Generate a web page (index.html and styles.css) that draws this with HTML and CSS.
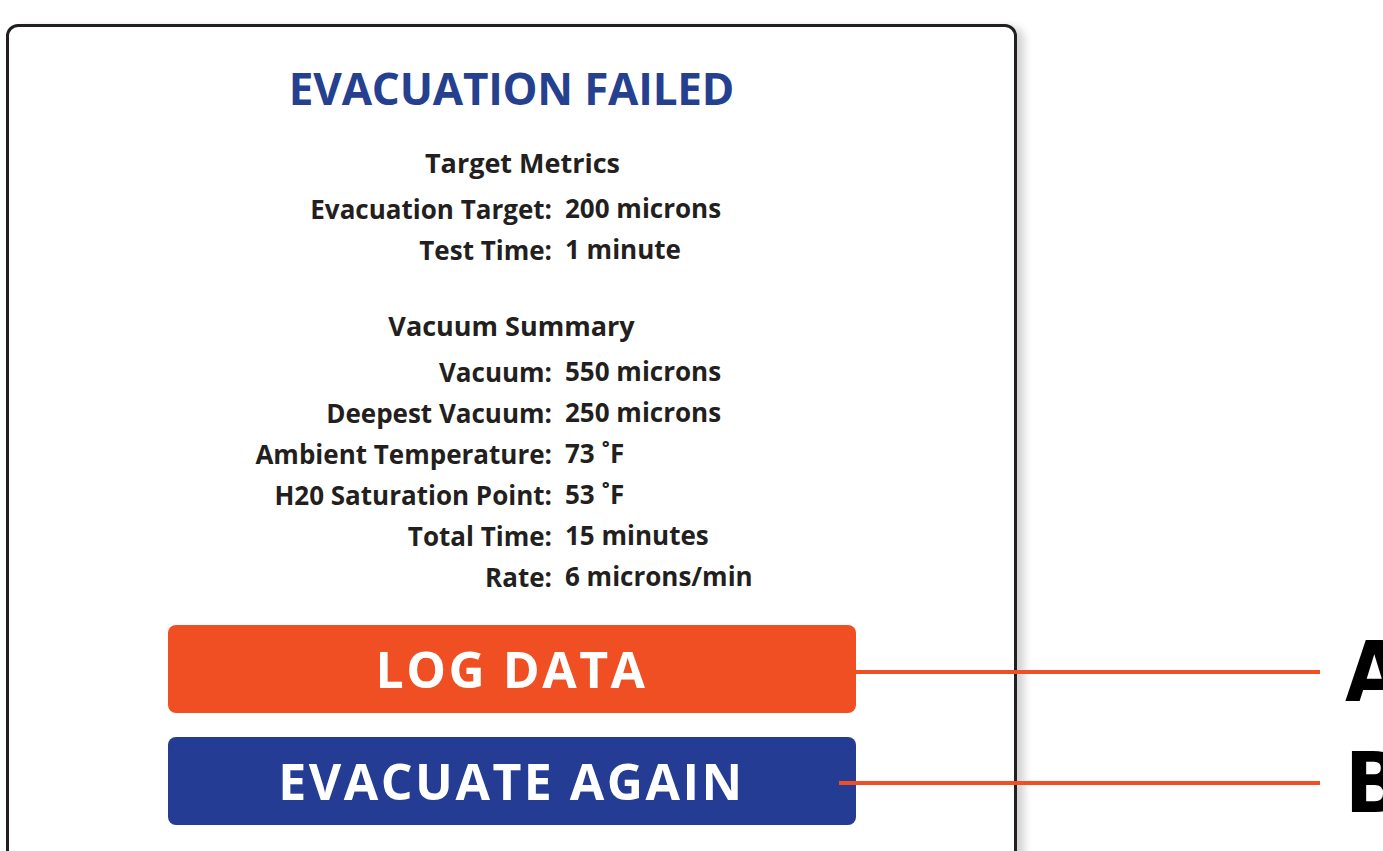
FILE: index.html
```html
<!DOCTYPE html>
<html lang="en">
<head>
    <meta charset="UTF-8">
    <meta name="viewport" content="width=device-width, initial-scale=1.0">
    <title>Evacuation Failed</title>
    <link rel="stylesheet" href="styles.css">
</head>
<body>
    <div class="page">
        <div class="card">
            <h1 class="title">EVACUATION FAILED</h1>

            <h2 class="group-title group-first">Target Metrics</h2>
            <dl class="metrics">
                <dt>Evacuation Target:</dt><dd>200 microns</dd>
                <dt>Test Time:</dt><dd>1 minute</dd>
            </dl>

            <h2 class="group-title group-second">Vacuum Summary</h2>
            <dl class="metrics">
                <dt>Vacuum:</dt><dd>550 microns</dd>
                <dt>Deepest Vacuum:</dt><dd>250 microns</dd>
                <dt>Ambient Temperature:</dt><dd>73 &#730;F</dd>
                <dt>H20 Saturation Point:</dt><dd>53 &#730;F</dd>
                <dt>Total Time:</dt><dd>15 minutes</dd>
                <dt>Rate:</dt><dd>6 microns/min</dd>
            </dl>

            <div class="actions">
                <button class="btn btn-log">LOG DATA</button>
                <button class="btn btn-again">EVACUATE AGAIN</button>
            </div>
        </div>

        <!-- callout labels -->
        <div class="callout callout-a"><span class="line"></span><span class="letter">A</span></div>
        <div class="callout callout-b"><span class="line"></span><span class="letter">B</span></div>
    </div>
</body>
</html>
```

FILE: styles.css
```css
body {
    margin: 0;
    background: #ffffff;
    font-family: "Open Sans", Arial, sans-serif;
    color: #231f20;
    overflow: hidden;
}
.page {
    position: relative;
    width: 1383px;
    height: 851px;
    overflow: hidden;
}
.card {
    margin: 24px 0 0 6px;
    width: 1005px;
    height: 900px;
    border: 3px solid #231f20;
    border-radius: 12px;
    box-shadow: 7px 3px 9px rgba(0, 0, 0, 0.18);
    padding-top: 38px;
    box-sizing: content-box;
}
.title {
    margin: 0;
    text-align: center;
    font-size: 44px;
    line-height: 46px;
    font-weight: 700;
    letter-spacing: -0.2px;
    color: #25408f;
}
.group-title {
    margin: 37px 0 11px;
    text-align: center;
    font-size: 27px;
    line-height: 30px;
    font-weight: 700;
}
.group-first {
    padding-left: 22px;
}
.group-second {
    margin-top: 40px;
    margin-bottom: 11px;
}
.metrics {
    display: grid;
    grid-template-columns: 543px 1fr;
    column-gap: 13px;
    margin: 0;
    font-size: 26px;
    line-height: 41px;
    font-weight: 700;
}
.metrics dt {
    text-align: right;
}
.metrics dd {
    margin: 0;
    position: relative;
    top: -1px;
}
.actions {
    display: flex;
    flex-direction: column;
    align-items: center;
    gap: 24px;
    margin-top: 27px;
}
.btn {
    width: 688px;
    height: 88px;
    border: none;
    border-radius: 8px;
    color: #ffffff;
    font-family: "Open Sans", Arial, sans-serif;
    font-size: 50px;
    font-weight: 700;
    letter-spacing: 2.5px;
    padding: 0;
}
.btn-log {
    background-color: #f04e23;
}
.btn-again {
    background-color: #243c93;
}
.callout {
    position: absolute;
    right: 0;
    display: flex;
    align-items: center;
    height: 80px;
}
.callout-a {
    top: 632px;
    left: 856px;
}
.callout-b {
    top: 743px;
    left: 839px;
}
.callout .line {
    flex: 1;
    height: 4px;
    background-color: #f04e23;
}
.callout .letter {
    width: 38px;
    margin-left: 25px;
    font-family: "Liberation Sans Narrow", "DejaVu Sans Condensed", sans-serif;
    font-weight: 700;
    font-size: 84px;
    line-height: 80px;
    color: #000000;
}
```
